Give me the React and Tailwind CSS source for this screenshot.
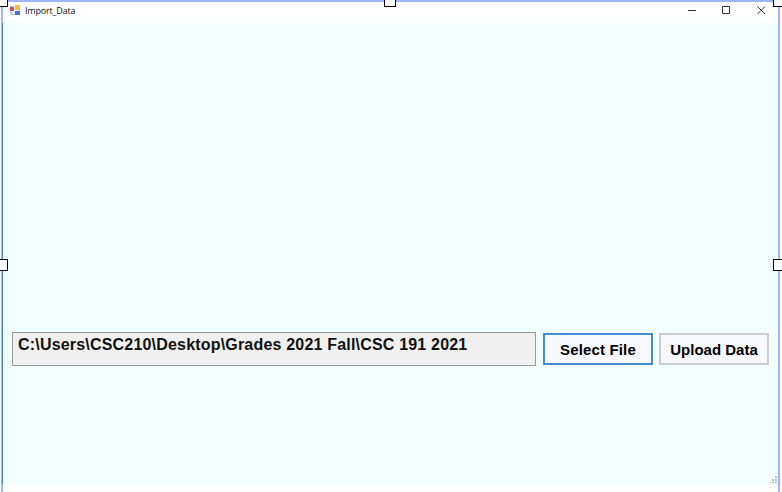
function Handle({ className }) {
  return <span className={`absolute z-10 border border-black bg-white ${className}`} />;
}

function FormIcon() {
  return (
    <svg className="mt-px" width="11" height="11" viewBox="0 0 11 11" aria-hidden="true">
      <rect x="0.5" y="1.5" width="9" height="8" fill="#f3f5f8" stroke="#c3c9d3" />
      <rect x="0" y="2" width="4" height="4" fill="#c0564c" />
      <rect x="5" y="0" width="5" height="5" fill="#f0bd48" />
      <rect x="1" y="7" width="3" height="2" fill="#d9dee7" />
      <rect x="5" y="6" width="5" height="4" fill="#4a70c0" />
    </svg>
  );
}

function TitleBar() {
  return (
    <header className="flex h-[21px] shrink-0 items-start bg-white pt-[2px] pl-[7px]">
      <FormIcon />
      <h1 className="ml-[4px] h-[13px] font-['Open_Sans',sans-serif] text-[9px] leading-[13px] tracking-[-0.18px] text-[#111]">Import_Data</h1>
      <svg className="ml-auto mr-[12px] shrink-0" width="79" height="13" viewBox="0 0 79 13" fill="none" stroke="#333" aria-hidden="true">
        <path d="M1 6.5h8M35.5 2.5h7v7h-7zM70.5 2.5l7.5 7.5M78 2.5L70.5 10" />
      </svg>
    </header>
  );
}

function SizeGrip() {
  return (
    <svg className="ml-auto mt-auto" width="8" height="8" viewBox="0 0 8 8" fill="#bdbdbd" aria-hidden="true">
      <path d="M5 0h2v2H5zM2 3h2v2H2zM5 3h2v2H5zM0 6h1v1H0zM2 6h2v1H2zM5 6h2v1H5z" />
    </svg>
  );
}

export default function App() {
  return (
    <main className="relative h-[492px] w-[782px] overflow-hidden bg-white pl-px font-['Liberation_Sans',Arial,sans-serif] text-black">
      <div className="flex h-[492px] w-[779px] flex-col border-x-2 border-t-2 border-[#9db5fb]">
        <TitleBar />
        <section className="-ml-px flex h-[461px] flex-col border-l border-[#3f7fee] bg-[#f2ffff] pl-[9px]">
          <div className="mt-[309px] flex items-start">
            <div className="h-[34px] w-[524px] overflow-hidden border border-[#999] bg-[#f0f0f0] pl-[5px] pt-[3px] text-[16px] font-bold leading-[18px] tracking-[0.19px] whitespace-nowrap text-[#111]">
              C:\Users\CSC210\Desktop\Grades 2021 Fall\CSC 191 2021
            </div>
            <button className="ml-[7px] mt-px h-[32px] w-[110px] border-2 border-[#438bd5] bg-[#f8f8ff] pt-[2px] text-[15px] font-bold leading-[18px] tracking-[0.15px] whitespace-nowrap">Select File</button>
            <button className="ml-[6px] mt-px h-[32px] w-[110px] border-2 border-[#cccccc] bg-[#f8f8ff] pt-[2px] text-[15px] font-bold leading-[18px] whitespace-nowrap">Upload Data</button>
          </div>
          <SizeGrip />
        </section>
      </div>
      <Handle className="-left-[4px] -top-[5px] size-[12px]" />
      <Handle className="left-[384px] -top-[5px] size-[12px]" />
      <Handle className="left-[773px] -top-[5px] size-[12px]" />
      <Handle className="-left-[4px] top-[259px] size-[12px]" />
      <Handle className="left-[773px] top-[259px] size-[12px]" />
    </main>
  );
}
